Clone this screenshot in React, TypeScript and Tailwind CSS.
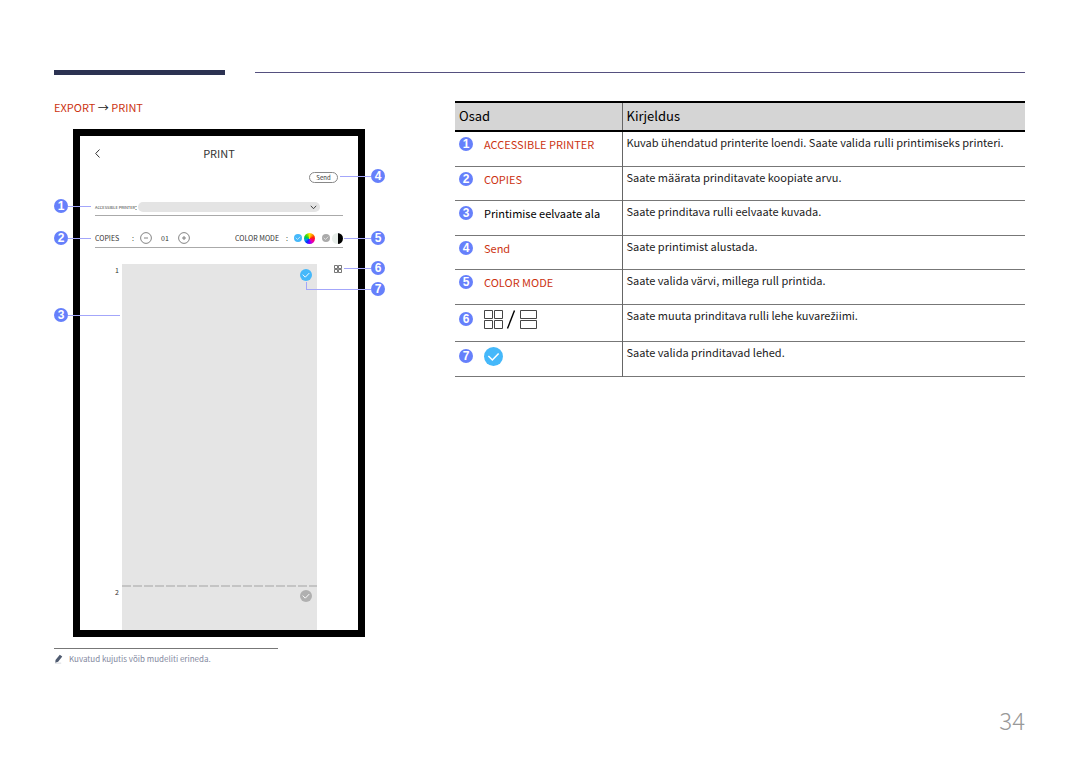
import React from "react";

interface CheckProps {
  className: string;
}

const Check: React.FC<CheckProps> = ({ className }) => (
  <svg viewBox="0 0 20 20" className={className} aria-hidden="true">
    <circle cx="10" cy="10" r="10" fill="currentColor" />
    <path d="M4.6 9.4l4.2 4.2 6.6-6.8" fill="none" stroke="#fff" strokeWidth="1.6" />
  </svg>
);

interface NumProps {
  children: React.ReactNode;
}

const Num: React.FC<NumProps> = ({ children }) => (
  <span className="flex h-[14px] w-[14px] shrink-0 items-center justify-center rounded-full bg-[#6680fb] font-['Liberation_Sans',sans-serif] text-xs font-bold leading-none text-white">
    {children}
  </span>
);

interface CalloutProps {
  n: number;
  place: string;
  right?: boolean;
}

const Callout: React.FC<CalloutProps> = ({ n, place, right }) => (
  <div className={"absolute flex items-center " + (right ? "flex-row-reverse " : "") + place}>
    <Num>{n}</Num>
    <span className="h-px flex-1 bg-[#a3a6fa]" />
  </div>
);

const FourPages: React.FC<CheckProps> = ({ className }) => (
  <svg viewBox="0 0 19 19" className={className} fill="none" stroke="#444" aria-hidden="true">
    <path d="M.5.5h8v8h-8zM10.5.5h8v8h-8zM.5 10.5h8v8h-8zM10.5 10.5h8v8h-8z" />
  </svg>
);

const TwoPages: React.FC = () => (
  <svg viewBox="0 0 17 19" className="h-[19px] w-[17px]" fill="none" stroke="#444" aria-hidden="true">
    <path d="M.5.5h16v8H.5zM.5 10.5h16v8H.5z" />
  </svg>
);

const ColorWheel: React.FC = () => (
  <span className="h-[11px] w-[11px] rounded-full bg-[conic-gradient(#ffe600,#ff9a00,#ff2a00,#ff0060,#e000c0,#7a00ff,#0030ff,#00a0e0,#00c850,#60e000,#ffe600)]" />
);

const Device: React.FC = () => (
  <div className="ml-[19px] mr-5 border-[7px] border-black bg-white px-[15px] text-[7px] leading-none text-[#333]">
    <div className="grid h-9 grid-cols-3 items-center pb-[2px]">
      <button type="button" aria-label="Back" className="flex h-3 w-3 items-center">
        <svg viewBox="0 0 6 9" className="h-[9px] w-[6px]" fill="none" stroke="#333">
          <path d="M4.5.5L.7 4.5l3.8 4" />
        </svg>
      </button>
      <span className="text-center text-[11px] leading-none">PRINT</span>
    </div>
    <div className="flex justify-end pr-[5px]">
      <button
        type="button"
        className="flex h-[11px] w-[29px] items-center justify-center rounded-full border border-[#888] text-[6px] leading-none"
      >
        Send
      </button>
    </div>
    <div className="flex h-[33px] items-end border-b border-[#aaa] pb-[3px]">
      <div className="flex h-[10px] w-[43px] items-center">
        <label htmlFor="printer" className="w-10 whitespace-nowrap text-[4px] leading-none">
          ACCESSIBLE PRINTER
        </label>
        <span>:</span>
      </div>
      <div className="relative mr-[23px] flex-1">
        <select id="printer" className="block h-[10px] w-full appearance-none rounded-full bg-[#e4e4e4]" />
        <svg viewBox="0 0 7 5" className="absolute right-[3px] top-[3px] h-[5px] w-[7px]" fill="none" stroke="#444">
          <path d="M.8.8l2.7 2.9L6.2.8" />
        </svg>
      </div>
    </div>
    <div className="flex h-8 items-end border-b border-[#aaa] pb-[3px]">
      <div className="flex h-3 w-full items-center">
        <span className="w-[37px]">COPIES</span>
        <span className="w-2">:</span>
        <button type="button" aria-label="Fewer copies">
          <svg viewBox="0 0 12 12" className="h-3 w-3" fill="none" stroke="#666" strokeWidth=".8">
            <circle cx="6" cy="6" r="5.4" />
            <path d="M4 6h4" />
          </svg>
        </button>
        <output className="w-[26px] text-center">01</output>
        <button type="button" aria-label="More copies">
          <svg viewBox="0 0 12 12" className="h-3 w-3" fill="none" stroke="#666" strokeWidth=".8">
            <circle cx="6" cy="6" r="5.4" />
            <path d="M4 6h4M6 4v4" />
          </svg>
        </button>
        <span className="ml-auto w-[51px]">COLOR MODE</span>
        <span className="w-2">:</span>
        <label className="relative flex items-center gap-[2px]">
          <input type="radio" name="mode" defaultChecked aria-label="Color" className="absolute h-2 w-2 opacity-0" />
          <Check className="h-2 w-2 text-[#45b8fa]" />
          <ColorWheel />
        </label>
        <label className="relative ml-[7px] flex items-center gap-[2px]">
          <input type="radio" name="mode" aria-label="Black and white" className="absolute h-2 w-2 opacity-0" />
          <Check className="h-2 w-2 text-[#aaa]" />
          <span className="h-[11px] w-[11px] rounded-full bg-[linear-gradient(90deg,#e8eeea_50%,#000_50%)]" />
        </label>
      </div>
    </div>
    <div className="mt-4 flex">
      <div className="flex-1">
        <div className="flex h-[321px]">
          <span className="w-[27px] pr-[3px] pt-[3px] text-right">1</span>
          <div className="flex flex-1 justify-end bg-[#e5e5e5] pr-[5px] pt-[5px]">
            <label className="relative h-3 w-3">
              <input type="checkbox" defaultChecked aria-label="Page 1" className="absolute h-3 w-3 opacity-0" />
              <Check className="h-3 w-3 text-[#45b8fa]" />
            </label>
          </div>
        </div>
        <div className="flex h-[45px]">
          <span className="w-[27px] pr-[3px] pt-1 text-right">2</span>
          <div className="flex-1 bg-[#e5e5e5]">
            <svg className="block h-[2px] w-full" aria-hidden="true">
              <line x1="0" y1="1" x2="100%" y2="1" stroke="#c4c4c4" strokeWidth="2" strokeDasharray="9 2" />
            </svg>
            <div className="flex justify-end pr-[5px] pt-[3px]">
              <label className="relative h-3 w-3">
                <input type="checkbox" aria-label="Page 2" className="absolute h-3 w-3 opacity-0" />
                <Check className="h-3 w-3 text-[#b0b0b0]" />
              </label>
            </div>
          </div>
        </div>
      </div>
      <button type="button" aria-label="View mode" className="flex w-[26px] justify-end self-start pr-[1px] pt-[1px]">
        <svg viewBox="0 0 8 8" className="h-2 w-2" fill="none" stroke="#555" strokeWidth=".8">
          <path d="M.5.5h3v3h-3zM4.5.5h3v3h-3zM.5 4.5h3v3h-3zM4.5 4.5h3v3h-3z" />
        </svg>
      </button>
    </div>
  </div>
);

const rows: { height: string; label: React.ReactNode; text: React.ReactNode }[] = [
  {
    height: "h-[35px]",
    label: <span className="text-[#cc3311]">ACCESSIBLE PRINTER</span>,
    text: "Kuvab ühendatud printerite loendi. Saate valida rulli printimiseks printeri.",
  },
  {
    height: "h-[34px]",
    label: <span className="text-[#cc3311]">COPIES</span>,
    text: "Saate määrata prinditavate koopiate arvu.",
  },
  {
    height: "h-[35px]",
    label: <span className="text-black">Printimise eelvaate ala</span>,
    text: "Saate prinditava rulli eelvaate kuvada.",
  },
  {
    height: "h-[34px]",
    label: <span className="text-[#cc3311]">Send</span>,
    text: "Saate printimist alustada.",
  },
  {
    height: "h-[35px]",
    label: <span className="text-[#cc3311]">COLOR MODE</span>,
    text: "Saate valida värvi, millega rull printida.",
  },
  {
    height: "h-[37px]",
    label: (
      <span className="flex items-center">
        <FourPages className="h-[19px] w-[19px]" />
        <svg viewBox="0 0 17 19" className="h-[19px] w-[17px]" fill="none" stroke="#000" strokeWidth="1.4">
          <path d="M11.5.5l-7 18" />
        </svg>
        <TwoPages />
      </span>
    ),
    // the CJK face has no ž of its own
    text: (
      <>
        Saate muuta prinditava rulli lehe kuvare<span className="font-['Noto_Sans',sans-serif]">ž</span>iimi.
      </>
    ),
  },
  {
    height: "h-[35px]",
    label: <Check className="h-[19px] w-[19px] text-[#45b8fa]" />,
    text: "Saate valida prinditavad lehed.",
  },
];

const PartsTable: React.FC = () => (
  <table className="w-full border-collapse text-left">
    <thead>
      <tr className="h-[29px] border-y-2 border-black bg-[#d5d5d5] text-[13px] leading-4 text-black">
        <th className="w-[167px] border-r border-r-[#666] px-1 pb-[2px] pt-0 font-normal">Osad</th>
        <th className="px-1 pb-[2px] pt-0 font-normal">Kirjeldus</th>
      </tr>
    </thead>
    <tbody>
      {rows.map((row, i) => (
        <tr key={i} className={"border-b border-[#777] " + row.height}>
          <td className="border-r border-r-[#666] px-1 pb-0 pt-[5px] align-top">
            <div className="flex items-center gap-[11px] text-[11px] leading-[14px]">
              <Num>{i + 1}</Num>
              {row.label}
            </div>
          </td>
          <td className="px-1 pb-0 pt-[2px] align-top text-[11px] leading-4">{row.text}</td>
        </tr>
      ))}
    </tbody>
  </table>
);

const App: React.FC = () => {
  return (
    <div className="min-h-screen bg-white pl-[54px] pr-[55px] pt-[70px] font-['Noto_Sans_CJK_SC','Noto_Sans',sans-serif] text-[#222]">
      <div className="flex items-center gap-[30px]">
        <div className="h-[5px] w-[171px] bg-[#2c3252]" />
        <div className="h-px flex-1 bg-[#55507f]" />
      </div>
      <main className="grid gap-x-[70px] pt-[26px] lg:grid-cols-[331px_minmax(0,1fr)]">
        <section>
          <h1 className="text-[11px] leading-3 text-[#cc3311]">
            EXPORT <span className="text-[#222]">→</span> PRINT
          </h1>
          <figure className="relative mt-4 max-w-[331px]">
            <Device />
            <Callout n={1} place="left-0 top-[70px] w-[37px]" />
            <Callout n={2} place="left-0 top-[102px] w-[37px]" />
            <Callout n={3} place="left-0 top-[179px] w-[66px]" />
            <Callout n={4} right place="right-0 top-[40px] w-[45px]" />
            <Callout n={5} right place="right-0 top-[102px] w-[41px]" />
            <Callout n={6} right place="right-0 top-[132px] w-[41px]" />
            <Callout n={7} right place="right-0 top-[153px] w-[79px]" />
            <span className="absolute right-[78px] top-[153px] h-2 w-px bg-[#a3a6fa]" />
          </figure>
          <div className="mt-[11px] flex w-[224px] items-center gap-[6px] border-t border-[#777] pt-1 text-[8px] leading-3 text-[#8489a0]">
            <svg viewBox="0 0 10 10" className="h-[10px] w-[9px]" aria-hidden="true">
              <path d="M6.4.2l2.8 2-4.6 5.8L1.4 9.2l.3-3.2z" fill="#4f5b70" />
              <path d="M1 9.6h7" stroke="#b5bac6" strokeWidth=".6" />
            </svg>
            <p>Kuvatud kujutis võib mudeliti erineda.</p>
          </div>
        </section>
        <section>
          <PartsTable />
        </section>
      </main>
      <footer className="mt-[41px] text-right text-2xl font-light leading-7 text-[#999]">34</footer>
    </div>
  );
};

export default App;
